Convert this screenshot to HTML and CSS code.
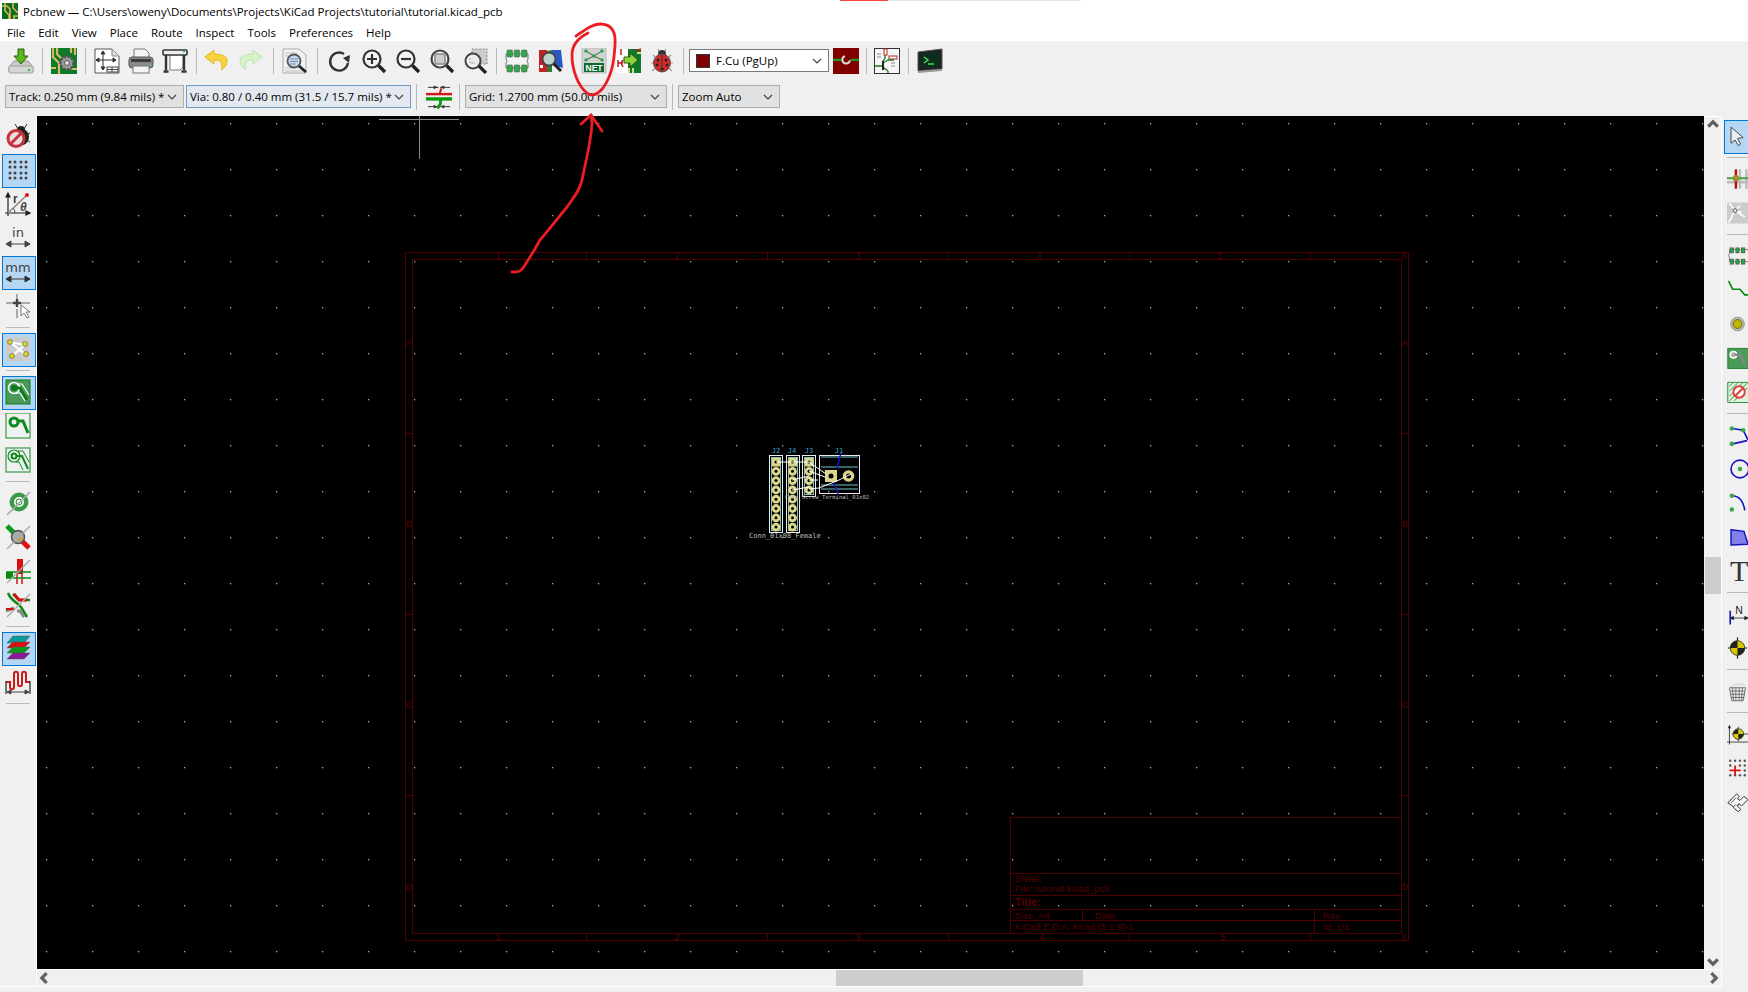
FILE: index.html
```html
<!DOCTYPE html>
<html lang="en">
<head>
    <meta charset="UTF-8">
    <title>Pcbnew — C:\Users\oweny\Documents\Projects\KiCad Projects\tutorial\tutorial.kicad_pcb</title>
    <link rel="stylesheet" href="styles.css">
</head>
<body>
<div class="app">
    <div class="titlebar">
        <svg class="app-icon" viewBox="0 0 16 16"><rect width="16" height="16" fill="#0b6b1e"/><path d="M0 3h5l3 3v10M3 0v8l4 4v4M11 0v5l5 5M16 13h-4v3" stroke="#d6b656" stroke-width="1.6" fill="none"/></svg>
        <span>Pcbnew — C:\Users\oweny\Documents\Projects\KiCad Projects\tutorial\tutorial.kicad_pcb</span>
    </div>
    <div class="menubar">
        <span>File</span><span>Edit</span><span>View</span><span>Place</span><span>Route</span><span>Inspect</span><span>Tools</span><span>Preferences</span><span>Help</span>
    </div>

    <div class="toolbar row-main">
        <!-- save -->
        <div class="tool"><svg class="ico" viewBox="0 0 26 26"><path d="M6 13h14l5 6v5H1v-5z" fill="#c9c9c9" stroke="#9a9a9a"/><rect x="1" y="18" width="24" height="7" rx="1.5" fill="#d6d6d6" stroke="#a0a0a0"/><circle cx="21" cy="22" r="1.2" fill="#2fc14a"/><path d="M10 1h6v7h4l-7 8-7-8h4z" fill="#57b81c" stroke="#2a5c10"/></svg></div>
        <div class="sep"></div>
        <!-- board setup -->
        <div class="tool"><svg class="ico" viewBox="0 0 26 26"><rect width="26" height="26" fill="#0d7a2a"/><path d="M2 0v9l6 6v11M6 0v6l5 5M0 20h5M20 0v5M24 0v7M20 21h6" stroke="#d8b765" stroke-width="2.2" fill="none"/><circle cx="16" cy="15" r="6.5" fill="#9a9a9a" stroke="#555" stroke-dasharray="2.4 1.4" stroke-width="2.4"/><circle cx="16" cy="15" r="2.4" fill="#e8e8e8" stroke="#555"/></svg></div>
        <div class="sep"></div>
        <!-- page settings -->
        <div class="tool"><svg class="ico" viewBox="0 0 26 26"><path d="M1 1h17l7 7v17H1z" fill="#fff" stroke="#555"/><path d="M18 1v7h7" fill="#ddd" stroke="#888"/><path d="M9 3v19M2 12h20M9 3l-2 3h4zM9 22l-2-3h4zM2 12l3-2v4zM22 12l-3-2v4z" stroke="#333" fill="#333"/><rect x="13" y="19" width="11" height="5" fill="#fff" stroke="#444"/><path d="M13 21.5h11M18 19v5" stroke="#444"/></svg></div>
        <!-- print -->
        <div class="tool"><svg class="ico" viewBox="0 0 26 26"><path d="M6 1h11l4 4v8H6z" fill="#f4f4f4" stroke="#777"/><rect x="1" y="9" width="24" height="11" rx="3" fill="#8a8a8a" stroke="#555"/><rect x="3" y="11" width="20" height="3" fill="#3c3c3c"/><rect x="5" y="18" width="16" height="7" fill="#f4f4f4" stroke="#777"/><circle cx="22" cy="17" r="1" fill="#3fcf55"/></svg></div>
        <!-- plot -->
        <div class="tool"><svg class="ico" viewBox="0 0 26 26"><path d="M8 6h13v13l-3 3H8z" fill="#fff" stroke="#777"/><rect x="1" y="2" width="24" height="5" rx="1" fill="#eee" stroke="#333" stroke-width="1.6"/><path d="M4 7v15M22 7v15M1.500 23.500h5M19.500 23.500h5" stroke="#333" stroke-width="2.4" fill="none"/><circle cx="22" cy="3.500" r="1" fill="#36c24f"/></svg></div>
        <div class="sep"></div>
        <!-- undo / redo -->
        <div class="tool"><svg class="ico" viewBox="2 0 26 26"><path d="M11 2 2 9l9 7v-4c5 0 8 1 8 7 0 2-1 3-1 3 5-3 6-6 6-9 0-5-5-7-13-7z" fill="#f7d33c" stroke="#e6b422"/></svg></div>
        <div class="tool"><svg class="ico" viewBox="1 0 26 26"><path d="M15 2l9 7-9 7v-4c-5 0-8 1-8 7 0 2 1 3 1 3-5-3-6-6-6-9 0-5 5-7 13-7z" fill="#d6f2c8" stroke="#c0e4b0"/></svg></div>
        <div class="sep"></div>
        <!-- find -->
        <div class="tool"><svg class="ico" viewBox="0 0 26 26"><path d="M1 1h16l7 6v18H1z" fill="#f2f2f2" stroke="#aaa"/><path d="M3 5h12M3 8h4M3 20h8M3 23h18" stroke="#bbb"/><circle cx="12" cy="13" r="6.500" fill="#c9dcf2" stroke="#555" stroke-width="1.800"/><path d="M8 11h8M8 13.500h8M8 16h6" stroke="#7a8ea5"/><path d="M17 18l7 6" stroke="#222" stroke-width="2.800"/></svg></div>
        <div class="sep wide"></div>
        <!-- redraw and zoom -->
        <div class="tool"><svg class="ico" viewBox="0 0 26 26"><path d="M17 6a9 9 0 1 0 4 9" fill="none" stroke="#333" stroke-width="2.400"/><path d="M23 7l-1 8-6-5z" fill="#333"/></svg></div>
        <div class="tool"><svg class="ico" viewBox="0 0 26 26"><circle cx="11" cy="11" r="8.500" fill="#f4f4f4" stroke="#333" stroke-width="2.200"/><path d="M6 11h10M11 6v10" stroke="#333" stroke-width="2.200"/><path d="M17.500 17.500l6.500 6.500" stroke="#222" stroke-width="3.400"/></svg></div>
        <div class="tool"><svg class="ico" viewBox="0 0 26 26"><circle cx="11" cy="11" r="8.500" fill="#f4f4f4" stroke="#333" stroke-width="2.200"/><path d="M6 11h10" stroke="#333" stroke-width="2.200"/><path d="M17.500 17.500l6.500 6.500" stroke="#222" stroke-width="3.400"/></svg></div>
        <div class="tool"><svg class="ico" viewBox="0 0 26 26"><circle cx="11" cy="11" r="8.500" fill="#f4f4f4" stroke="#444" stroke-width="2.200"/><rect x="6" y="6" width="10" height="10" rx="1.500" fill="#ccc" stroke="#888" stroke-width="1.500"/><path d="M17.500 17.500l6.500 6.500" stroke="#222" stroke-width="3.400"/></svg></div>
        <div class="tool"><svg class="ico" viewBox="0 0 26 26"><rect x="9" y="1" width="15" height="15" fill="#ccc" stroke="#888" stroke-dasharray="2 1.500"/><circle cx="10" cy="13" r="7.500" fill="#f4f4f4" fill-opacity=".8" stroke="#444" stroke-width="2"/><path d="M7 10v5h5" stroke="#999" fill="none" stroke-dasharray="2 1"/><path d="M16 18l7 7" stroke="#222" stroke-width="3.200"/></svg></div>
        <div class="sep narrow"></div>
        <!-- footprint editor -->
        <div class="tool"><svg class="ico" viewBox="0 0 26 26"><path d="M2 6h22v5l-1 2 1 2v5H2v-5l1-2-1-2z" fill="#f4f4f4" stroke="#777"/><g fill="#2fa84a" stroke="#555" stroke-width=".6"><rect x="3" y="2" width="5.500" height="7" rx="1"/><rect x="10.200" y="2" width="5.500" height="7" rx="1"/><rect x="17.500" y="2" width="5.500" height="7" rx="1"/><rect x="3" y="17" width="5.500" height="7" rx="1"/><rect x="10.200" y="17" width="5.500" height="7" rx="1"/><rect x="17.500" y="17" width="5.500" height="7" rx="1"/></g></svg></div>
        <!-- footprint browser -->
        <div class="tool"><svg class="ico" viewBox="0 0 26 26"><rect x="1" y="2" width="8" height="22" fill="#c42127"/><path d="M9 3l5-1v22l-5 0z" fill="#2d7d36"/><path d="M14 2l9 0 2 18-11-3z" fill="#2b59c3"/><rect x="2" y="17" width="3" height="3" fill="#fff"/><circle cx="11" cy="11" r="6.500" fill="#cfe6e0" fill-opacity=".85" stroke="#444" stroke-width="1.800"/><path d="M16 16l7 7" stroke="#222" stroke-width="3"/></svg></div>
        <div class="sep hidden"></div>
        <!-- update from netlist, the one circled in red -->
        <div class="tool"><svg class="ico" viewBox="0 0 24 26"><rect width="24" height="25" fill="#d2d2d2" stroke="#bbb"/><path d="M4 3l8 5 8-5M4 12l8-4 8 4" stroke="#2d6a2d" fill="none"/><g fill="#35a04a"><circle cx="4" cy="3" r="1.700"/><circle cx="20" cy="3" r="1.700"/><circle cx="12" cy="8" r="1.700"/><circle cx="4" cy="12" r="1.700"/><circle cx="20" cy="12" r="1.700"/></g><rect x="2" y="15" width="20" height="9" fill="#0b6b2e"/><text x="12" y="23" class="net-label">NET</text></svg></div>
        <!-- update pcb from schematic -->
        <div class="tool"><svg class="ico" viewBox="0 0 26 26"><rect x="10" y="1" width="16" height="24" fill="#0d7a2a"/><rect x="1" y="1" width="12" height="24" fill="#fff"/><path d="M6 1v6M3 12v7M3 15h5M8 12l-2 3 2 4M14 20v5M18 20v5M20 3l6-2" stroke="#b22" stroke-width="1.500" fill="none"/><path d="M14 20v5M18 20v5M22 5h4" stroke="#d8d88a" stroke-width="2"/><path d="M9 9h6V5l8 7-8 7v-4H9z" fill="#8fd23c" stroke="#2f5a12"/></svg></div>
        <!-- erc bug -->
        <div class="tool"><svg class="ico" viewBox="0 0 22 26"><path d="M2 7l5 5M20 7l-5 5M0 15h22M1 23l5-4M21 23l-5-4M7 1l2 4M15 1l-2 4" stroke="#999" stroke-width="1.200"/><circle cx="11" cy="6" r="4" fill="#333"/><ellipse cx="11" cy="15" rx="8.500" ry="9" fill="#d42a2a" stroke="#555"/><path d="M11 7v17" stroke="#333"/><g fill="#222"><circle cx="7" cy="12" r="1.500"/><circle cx="15" cy="12" r="1.500"/><circle cx="6" cy="17" r="1.500"/><circle cx="16" cy="17" r="1.500"/><circle cx="10" cy="21" r="1"/><circle cx="12.500" cy="21" r="1"/></g></svg></div>
        <div class="sep"></div>
        <div class="combo combo-white layer-combo">
            <span class="swatch"></span><span class="combo-text">F.Cu (PgUp)</span>
            <svg class="chev" viewBox="0 0 10 6"><path d="M1 1l4 4 4-4" fill="none" stroke="#444" stroke-width="1.200"/></svg>
        </div>
        <!-- via layer pair -->
        <div class="tool"><svg class="ico" viewBox="0 0 24 24"><rect width="24" height="24" fill="#800000"/><path d="M0 11h8M16 11h8" stroke="#1f9a1f" stroke-width="2"/><path d="M15 9a3.500 3.500 0 1 1-6 0" transform="rotate(40 12 11)" fill="none" stroke="#ddd" stroke-width="1.800"/></svg></div>
        <div class="sep narrow"></div>
        <!-- eeschema -->
        <div class="tool"><svg class="ico" viewBox="0 0 26 26"><rect x=".5" y=".5" width="25" height="25" fill="#f6f6f6" stroke="#333"/><rect x="10" y="1" width="3" height="6" fill="#fff" stroke="#b22"/><rect x="15" y="8" width="8" height="3" fill="#fff" stroke="#b22"/><path d="M11 7v3l-2 3M5 18h4M9 13v9M9 15l5-3M9 19l5 4M14 12h6M14 23v2M5 18H1" stroke="#1a7a1a" stroke-width="1.300" fill="none"/><path d="M9 13v9" stroke="#222" stroke-width="2"/><path d="M3 6h4M3 9h4M17 15h4M17 18h4" stroke="#888"/></svg></div>
        <div class="sep"></div>
        <!-- scripting console -->
        <div class="tool"><svg class="ico" viewBox="0 0 26 26"><path d="M1 4l24-3v20l-24 2z" fill="#222" stroke="#555"/><path d="M3 6l20-2.500v15L3 20z" fill="#0d2e1c"/><path d="M7 9l4 3-4 3M11 16h6" stroke="#3fe05c" stroke-width="1.500" fill="none"/><path d="M1 23l24-2v2l-24 2z" fill="#999"/></svg></div>
    </div>

    <div class="toolbar row-aux">
        <div class="combo track-combo"><span class="combo-text">Track: 0.250 mm (9.84 mils) *</span><svg class="chev" viewBox="0 0 10 6"><path d="M1 1l4 4 4-4" fill="none" stroke="#444" stroke-width="1.200"/></svg></div>
        <div class="combo combo-focus via-combo"><span class="combo-text">Via: 0.80 / 0.40 mm (31.5 / 15.7 mils) *</span><svg class="chev" viewBox="0 0 10 6"><path d="M1 1l4 4 4-4" fill="none" stroke="#444" stroke-width="1.200"/></svg></div>
        <div class="sep aux-sep"></div>
        <!-- auto track width -->
        <div class="tool wide-tool"><svg class="ico" viewBox="0 0 27 26"><path d="M2 3h11M15 3h10M8 3l4 0M19 3h-4M2 23h11M15 23h10" stroke="#333"/><path d="M8 1l4 2-4 2zM19 1l-4 2 4 2zM8 21l4 2-4 2zM19 21l-4 2 4 2z" fill="#333"/><path d="M0 10h27" stroke="#d01818" stroke-width="2.500"/><path d="M14 10l2-6" stroke="#d01818" stroke-width="2"/><path d="M0 15h27" stroke="#0a9a0a" stroke-width="3.500"/><path d="M15 15v5l-3 5" stroke="#0a9a0a" stroke-width="3" fill="none"/></svg></div>
        <div class="sep narrow"></div>
        <div class="combo grid-combo"><span class="combo-text">Grid: 1.2700 mm (50.00 mils)</span><svg class="chev" viewBox="0 0 10 6"><path d="M1 1l4 4 4-4" fill="none" stroke="#444" stroke-width="1.200"/></svg></div>
        <div class="sep aux-sep"></div>
        <div class="combo zoom-combo"><span class="combo-text">Zoom Auto</span><svg class="chev" viewBox="0 0 10 6"><path d="M1 1l4 4 4-4" fill="none" stroke="#444" stroke-width="1.200"/></svg></div>
    </div>

    <div class="workspace">
        <div class="side-tools left-tools">
            <!-- drc off -->
            <div class="tool"><svg class="ico" viewBox="0 0 26 26"><path d="M10 1l3 5M22 1l-3 5M6 9l4 3M25 10l-4 2M25 19l-4-2" stroke="#333"/><circle cx="16" cy="7" r="4" fill="#222"/><ellipse cx="16" cy="14" rx="8" ry="8.500" fill="#222"/><circle cx="11" cy="15.500" r="8" fill="#eadfdf" stroke="#c8323c" stroke-width="3"/><path d="M5.500 21l11-11" stroke="#c8323c" stroke-width="3"/></svg></div>
            <!-- grid -->
            <div class="tool on"><svg class="ico" viewBox="0 0 26 26"><g fill="#444"><circle cx="5" cy="5" r="1.500"/><circle cx="10" cy="5" r="1.500"/><circle cx="16" cy="5" r="1.500"/><circle cx="21" cy="5" r="1.500"/><circle cx="5" cy="10" r="1.500"/><circle cx="10" cy="10" r="1.500"/><circle cx="16" cy="10" r="1.500"/><circle cx="21" cy="10" r="1.500"/><circle cx="5" cy="16" r="1.500"/><circle cx="10" cy="16" r="1.500"/><circle cx="16" cy="16" r="1.500"/><circle cx="21" cy="16" r="1.500"/><circle cx="5" cy="21" r="1.500"/><circle cx="10" cy="21" r="1.500"/><circle cx="16" cy="21" r="1.500"/><circle cx="21" cy="21" r="1.500"/></g></svg></div>
            <!-- polar coords -->
            <div class="tool"><svg class="ico" viewBox="0 0 26 26"><path d="M3 2v23M0 22h25M3 2l-2 4h4zM25 22l-4-2v4z" stroke="#222" fill="#222" stroke-width="1.200"/><path d="M3 22L22 4" stroke="#888" stroke-width="1.500"/><circle cx="22" cy="4" r="2" fill="#e81010"/><path d="M10 22a7 7 0 0 0-2-5" fill="none" stroke="#444"/><text x="8" y="12" class="ico-label">r</text><text x="15" y="20" class="ico-label italic">θ</text></svg></div>
            <!-- inch -->
            <div class="tool"><svg class="ico" viewBox="0 0 26 26"><text x="13" y="12" class="ico-unit">in</text><path d="M1 19h24M1 19l5-3v6zM25 19l-5-3v6z" stroke="#444" fill="#444"/></svg></div>
            <!-- millimetres -->
            <div class="tool on"><svg class="ico" viewBox="0 0 26 26"><text x="13" y="13" class="ico-unit">mm</text><path d="M1 20h24M1 20l5-3v6zM25 20l-5-3v6z" stroke="#333" fill="#333"/></svg></div>
            <!-- full cursor -->
            <div class="tool"><svg class="ico" viewBox="0 0 26 26"><path d="M12 1v9M12 16v9M1 10h24" stroke="#aaa" stroke-width="2"/><path d="M8 10h8M12 6v8" stroke="#444" stroke-width="2.400"/><path d="M16 12v11l3-3 3 5 2-1-3-5h4z" fill="#fff" stroke="#777"/></svg></div>
            <div class="side-sep"></div>
            <!-- ratsnest -->
            <div class="tool on"><svg class="ico" viewBox="0 0 26 26"><rect x="1" y="1" width="24" height="24" rx="2" fill="#ccc"/><path d="M5 6l15 3M5 6l16 13M7 20L20 9" stroke="#fff" stroke-width="2"/><g fill="#d8d820" stroke="#555" stroke-width=".6"><circle cx="5" cy="6" r="2.500"/><circle cx="20" cy="8" r="2.500"/><circle cx="7" cy="20" r="2.500"/><circle cx="21" cy="18" r="2.500"/></g></svg></div>
            <div class="side-sep"></div>
            <!-- zone fill modes -->
            <div class="tool on"><svg class="ico" viewBox="0 0 26 26"><rect x="1" y="1" width="24" height="24" fill="#4a9a5a" stroke="#127a20"/><circle cx="9" cy="9" r="5.500" fill="none" stroke="#fff" stroke-width="1.500"/><circle cx="9" cy="9" r="3" fill="#0a7a1a"/><path d="M9 9h6l7 12" fill="none" stroke="#0a7a1a" stroke-width="2.500"/><path d="M12 5h5l7 11M11 14h4l5 8" fill="none" stroke="#fff" stroke-width="1.200"/></svg></div>
            <div class="tool"><svg class="ico" viewBox="0 0 26 26"><rect x="1" y="0" width="24" height="25" fill="none" stroke="#3a9a4a" stroke-width="1.200"/><circle cx="9" cy="9" r="4" fill="none" stroke="#0a8a1a" stroke-width="3"/><path d="M13 8h5l5 12" fill="none" stroke="#0a8a1a" stroke-width="3"/></svg></div>
            <div class="tool"><svg class="ico" viewBox="0 0 26 26"><rect x="1" y="1" width="24" height="24" fill="none" stroke="#3a9a4a" stroke-width="1.200"/><circle cx="9" cy="9" r="2.500" fill="none" stroke="#0a8a1a" stroke-width="2"/><circle cx="9" cy="9" r="6" fill="none" stroke="#0a8a1a" stroke-width="1.200"/><path d="M12 9h5l6 13" fill="none" stroke="#0a8a1a" stroke-width="2"/><path d="M13 4h5l6 11M11 15h3l4 8" fill="none" stroke="#0a8a1a" stroke-width="1"/></svg></div>
            <div class="side-sep"></div>
            <!-- outline modes -->
            <div class="tool"><svg class="ico" viewBox="0 0 26 26"><circle cx="14" cy="12" r="9" fill="#3a9a4a" stroke="#3a9a4a"/><circle cx="14" cy="12" r="5" fill="#fff"/><circle cx="14" cy="12" r="3" fill="none" stroke="#1a8a2a"/><path d="M2 25L25 2" stroke="#aaa" stroke-width="1.500"/></svg></div>
            <div class="tool"><svg class="ico" viewBox="0 0 26 26"><path d="M2 2l10 10" stroke="#0a9a1a" stroke-width="5"/><path d="M14 14l10 10" stroke="#e01010" stroke-width="5"/><circle cx="13" cy="13" r="6.500" fill="#aaa" stroke="#555" stroke-width="1.500"/><path d="M12 17l4-5 1 4z" fill="#d8a010"/><path d="M2 25L25 2" stroke="#aaa" stroke-width="1.500"/></svg></div>
            <div class="tool"><svg class="ico" viewBox="0 0 26 26"><rect x="12" y="1" width="6" height="15" fill="#d81010"/><path d="M12 16v10M17 16v10" stroke="#d81010" stroke-width="1.500"/><rect x="1" y="14" width="7" height="6" fill="#0a8a10"/><path d="M1 14h25M1 20h25" stroke="#0a8a10" stroke-width="1.500"/><path d="M2 25L25 2" stroke="#aaa" stroke-width="1.500"/></svg></div>
            <div class="tool"><svg class="ico" viewBox="0 0 26 26"><path d="M8 2l6 6 11 0M3 1c3 8 9 9 13 14l6 10" fill="none" stroke="#0a8a10" stroke-width="2.500"/><path d="M9 2l5 6h8" fill="none" stroke="#d81010" stroke-width="3"/><path d="M1 19l8-3M12 19h3l4 6" fill="none" stroke="#888" stroke-width="3"/><path d="M1 17h8" stroke="#d81010" stroke-width="2"/><path d="M2 25L25 2" stroke="#aaa" stroke-width="1.500"/></svg></div>
            <div class="side-sep"></div>
            <!-- layer colours -->
            <div class="tool on"><svg class="ico" viewBox="0 0 26 26"><path d="M8 1h17l-6 7H2z" fill="#0a9a9a" stroke="#555" stroke-width=".5"/><path d="M8 7h17l-6 6H2z" fill="#d81010" stroke="#555" stroke-width=".5"/><path d="M8 12h17l-6 6H2z" fill="#0a9a1a" stroke="#555" stroke-width=".5"/><path d="M8 18h17l-6 6H2z" fill="#8a1a9a" stroke="#555" stroke-width=".5"/></svg></div>
            <!-- length tuning -->
            <div class="tool"><svg class="ico" viewBox="0 0 26 26"><path d="M1 13h4v5c0 3 4 3 4 0V5c0-3 4-3 4 0v10c0 3 4 3 4 0V5c0-3 4-3 4 0v8h4" fill="none" stroke="#d01a1a" stroke-width="2"/><path d="M1 12v13M25 12v13" stroke="#222" stroke-width="1.200"/><path d="M2 23h22M2 23l4-2v4zM24 23l-4-2v4z" stroke="#444" fill="#444"/></svg></div>
            <div class="side-sep"></div>
        </div>

        <div class="center">
            <div class="canvas-row">
                <svg class="canvas" viewBox="37 116 1667 853">
                    <defs>
                        <pattern id="dots" width="46" height="46" patternUnits="userSpaceOnUse" y="31"><rect width="1.300" height="1.300" fill="#a8a8a8"/></pattern>
                        <g id="pad"><circle r="4.400" fill="#dcd68a"/><circle r="1.500" fill="#000"/></g>
                        <g id="col4"><use href="#pad" y="0"/><use href="#pad" y="9.300"/><use href="#pad" y="18.600"/><use href="#pad" y="27.900"/></g>
                    </defs>
                    <rect x="37" y="116" width="1667" height="853" fill="#000"/>
                    <rect x="37" y="116" width="1667" height="853" fill="url(#dots)" class="crisp"/>

                    <!-- crosshair -->
                    <path d="M379 119.500h80M419.500 116v43" stroke="#888" class="crisp"/>

                    <!-- sheet frame -->
                    <g class="sheet">
                        <rect x="405.500" y="252.500" width="1003" height="688"/>
                        <rect x="412.500" y="259.500" width="989" height="674"/>
                        <path d="M586.500 252v7M767.500 252v7M948.500 252v7M1129.500 252v7M1310.500 252v7M586.500 934v6M767.500 934v6M948.500 934v6M1129.500 934v6M1310.500 934v6"/>
                        <path d="M406 433.500h6M406 614.500h6M406 795.500h6M1402 433.500h7M1402 614.500h7M1402 795.500h7"/>
                        <rect x="1010.500" y="817.500" width="391" height="116"/>
                        <path d="M1010 873.500h391M1010 895.500h391M1010 909.500h391M1010 920.500h391M1082.500 909v11M1314.500 909v24"/>
                    </g>
                    <g class="sheet-text">
                        <text x="498" y="259" class="mid">1</text><text x="677" y="259" class="mid">2</text><text x="858" y="259" class="mid">3</text><text x="1039" y="259" class="mid">4</text><text x="1220" y="259" class="mid">5</text><text x="1404" y="259" class="mid">6</text>
                        <text x="498" y="940" class="mid">1</text><text x="677" y="940" class="mid">2</text><text x="858" y="940" class="mid">3</text><text x="1042" y="940" class="mid">4</text><text x="1223" y="940" class="mid">5</text><text x="1404" y="940" class="mid">6</text>
                        <text x="409" y="346" class="mid">A</text><text x="409" y="527" class="mid">B</text><text x="409" y="708" class="mid">C</text><text x="409" y="890" class="mid">D</text>
                        <text x="1405" y="346" class="mid">A</text><text x="1405" y="527" class="mid">B</text><text x="1405" y="708" class="mid">C</text><text x="1405" y="890" class="mid">D</text>
                        <text x="1015" y="882">Sheet:</text>
                        <text x="1015" y="892">File: tutorial.kicad_pcb</text>
                        <text x="1015" y="906" class="sheet-title">Title:</text>
                        <text x="1015" y="919">Size: A4</text>
                        <text x="1095" y="919">Date:</text>
                        <text x="1323" y="919">Rev:</text>
                        <text x="1015" y="930">KiCad E.D.A.  kicad (5.1.9)-1</text>
                        <text x="1323" y="930">Id: 1/1</text>
                    </g>

                    <!-- board -->
                    <g class="courtyard">
                        <rect x="769.500" y="455.500" width="13" height="77"/>
                        <rect x="786.500" y="455.500" width="13" height="77"/>
                        <rect x="802.500" y="455.500" width="13" height="41"/>
                        <rect x="819.500" y="455.500" width="40" height="38"/>
                    </g>
                    <g class="fab">
                        <rect x="771.500" y="457.500" width="9" height="73"/>
                        <rect x="788.500" y="457.500" width="9" height="73"/>
                        <rect x="804.500" y="457.500" width="9" height="37"/>
                        <path d="M821 467h37M821 485h37M821 489h37M821 457h37"/>
                    </g>
                    <rect x="772" y="458" width="8.500" height="8.500" fill="#dcd68a"/>
                    <rect x="788.500" y="458" width="8.500" height="8.500" fill="#dcd68a"/>
                    <rect x="805" y="458" width="8.500" height="8.500" fill="#dcd68a"/>
                    <use href="#col4" x="776" y="462"/><use href="#col4" x="776" y="499.200"/>
                    <use href="#col4" x="792.500" y="462"/><use href="#col4" x="792.500" y="499.200"/>
                    <use href="#col4" x="809" y="462"/>
                    <rect x="825" y="470" width="12" height="12" fill="#dcd68a"/>
                    <circle cx="831" cy="476" r="2.500"/>
                    <circle cx="848.500" cy="476" r="5.800" fill="#dcd68a"/><circle cx="848.500" cy="476" r="2.500"/>
                    <path d="M841 453l-4 15M834 482l4 12" stroke="#1414d8" stroke-width="1.400"/>
                    <path d="M776 462h33M809 462l17 12M792 480l17-4M809 471l16 6M792 490l17-3M809 480h9M809 489l10-1 20-8 12-6" stroke="#fff" class="ratsnest"/>
                    <g class="ref">
                        <text x="776" y="453">J2</text><text x="792" y="453">J4</text><text x="809" y="453">J3</text><text x="839" y="453">J1</text>
                    </g>
                    <g class="fp-value">
                        <text x="749" y="538">Conn_01x08_Female</text>
                        <text x="785" y="499" class="fp-small">Conn_Screw_Terminal_01x02</text>
                    </g>
                </svg>
                <div class="vscroll">
                    <svg class="arrow" viewBox="0 0 10 10"><path d="M2 6l3-3 3 3" fill="none" stroke="#606060" stroke-width="2"/></svg>
                    <div class="vtrack"><div class="vthumb"></div></div>
                    <svg class="arrow" viewBox="0 0 10 10"><path d="M2 4l3 3 3-3" fill="none" stroke="#606060" stroke-width="2"/></svg>
                </div>
            </div>
            <div class="hscroll">
                <svg class="arrow" viewBox="0 0 10 10"><path d="M6 2L3 5l3 3" fill="none" stroke="#606060" stroke-width="2"/></svg>
                <div class="htrack"><div class="hthumb"></div></div>
                <svg class="arrow" viewBox="0 0 10 10"><path d="M4 2l3 3-3 3" fill="none" stroke="#606060" stroke-width="2"/></svg>
            </div>
        </div>

        <div class="side-tools right-tools">
            <div class="tool on"><svg class="ico" viewBox="0 0 26 26"><path d="M5 2v20l5-4 4 7 3-2-4-7 7-1z" fill="#e8eef4" stroke="#444" stroke-width="1.200"/></svg></div>
            <div class="side-sep"></div>
            <div class="tool"><svg class="ico" viewBox="0 0 26 26"><path d="M16 1v24M24 1v24M0 17h26" stroke="#bbb" stroke-width="3"/><path d="M0 12h26" stroke="#5aa85a" stroke-width="3"/><path d="M11 1v24" stroke="#b01010" stroke-width="3"/><circle cx="11" cy="12" r="4" fill="#a88a30"/></svg></div>
            <div class="tool"><svg class="ico" viewBox="0 0 26 26"><rect width="26" height="26" rx="2" fill="#ccc"/><path d="M10 10L3 1M10 10L16 4M10 10L2 25M10 10L18 12M10 10l12 8" stroke="#fff" stroke-width="2"/><circle cx="10" cy="10" r="2.500" fill="#ddd" stroke="#444"/></svg></div>
            <div class="side-sep"></div>
            <div class="tool"><svg class="ico" viewBox="0 0 26 26"><path d="M3 5h23M3 20h23M3 5v5l-1 2 1 3v5" stroke="#666" fill="none"/><g fill="#1fb03a" stroke="#555"><rect x="4" y="3" width="4" height="6"/><rect x="11" y="3" width="4" height="6"/><rect x="18" y="3" width="4" height="6"/><rect x="4" y="17" width="4" height="6"/><rect x="11" y="17" width="4" height="6"/><rect x="18" y="17" width="4" height="6"/></g></svg></div>
            <div class="tool"><svg class="ico" viewBox="0 0 26 26"><path d="M2 2l5 10h9l6 7h4" fill="none" stroke="#0a8a10" stroke-width="2"/></svg></div>
            <div class="tool"><svg class="ico" viewBox="0 0 26 26"><circle cx="13" cy="13" r="8.500" fill="#bbb" stroke="#888" stroke-width="1"/><circle cx="13" cy="13" r="5.500" fill="#c0b800" stroke="#5a5a00"/></svg></div>
            <div class="tool"><svg class="ico" viewBox="0 0 26 26"><rect x="1" y="1" width="26" height="25" fill="#4a9a5a" stroke="#127a20"/><circle cx="8" cy="9" r="4" fill="#aaa" stroke="#fff" stroke-width="2"/><path d="M10 9h6l6 12" fill="none" stroke="#888" stroke-width="3"/></svg></div>
            <div class="tool"><svg class="ico" viewBox="0 0 26 26"><rect x="1" y="1" width="26" height="25" fill="#dff0df" stroke="#0a7a1a"/><path d="M3 6l4-4M3 12l10-10M3 18l16-16M3 24l22-22M9 24l16-16" stroke="#2a9a3a" stroke-width="1.200"/><circle cx="15" cy="13" r="7" fill="#fff" stroke="#e04040" stroke-width="2.500"/><path d="M10 18l10-10" stroke="#e04040" stroke-width="2.500"/></svg></div>
            <div class="side-sep"></div>
            <div class="tool"><svg class="ico" viewBox="0 0 26 26"><path d="M7 5l13 2 6 12M7 24l18-4" fill="none" stroke="#1414c0" stroke-width="2"/><circle cx="6" cy="5" r="2.800" fill="#3aa84a"/><circle cx="20" cy="7" r="2.800" fill="#3aa84a"/><circle cx="6" cy="24" r="2.800" fill="#3aa84a"/></svg></div>
            <div class="tool"><svg class="ico" viewBox="0 0 26 26"><circle cx="16" cy="13" r="11" fill="none" stroke="#1414c0" stroke-width="2"/><circle cx="16" cy="13" r="2.800" fill="#3aa84a"/></svg></div>
            <div class="tool"><svg class="ico" viewBox="0 0 26 26"><path d="M6 4c8 0 14 6 16 18" fill="none" stroke="#1414c0" stroke-width="2"/><circle cx="6" cy="4" r="2.800" fill="#3aa84a"/><circle cx="6" cy="21" r="2.800" fill="#3aa84a"/></svg></div>
            <div class="tool"><svg class="ico" viewBox="0 0 26 26"><path d="M5 4l16 2 5 16-21 1z" fill="#8080e8" stroke="#1414c0" stroke-width="1.800"/></svg></div>
            <div class="tool"><span class="tool-letter">T</span></div>
            <div class="side-sep"></div>
            <div class="tool"><svg class="ico" viewBox="0 0 26 26"><text x="15" y="13" class="ico-n">N</text><path d="M4 18h22M4 18l4-2v4zM26 18l-4-2v4z" stroke="#222" fill="#222"/><path d="M4 9v17" stroke="#1414c0" stroke-width="2"/></svg></div>
            <div class="tool"><svg class="ico" viewBox="0 0 26 26"><path d="M13 0v26M1 13h24" stroke="#222" stroke-width="1.500"/><circle cx="13" cy="13" r="9" fill="#d8c800" stroke="#222"/><path d="M13 4a9 9 0 0 0-9 9h9zM13 22a9 9 0 0 0 9-9h-9z" fill="#222"/></svg></div>
            <div class="side-sep"></div>
            <div class="tool"><svg class="ico" viewBox="0 0 26 26"><path d="M5 8c3-5 14-5 18-1" fill="#e8e8e8" stroke="#ccc"/><path d="M3 9h20l-3 16H6z" fill="#f4f4f4" stroke="#555"/><path d="M7 9l1 16M11 9v16M15 9v16M19 9l-1 16M4 13h18M5 17h17M5 21h16" stroke="#555"/></svg></div>
            <div class="side-sep"></div>
            <div class="tool"><svg class="ico" viewBox="0 0 26 26"><path d="M3 2v24M0 23h26" stroke="#222"/><path d="M3 2l-2 4h4z" fill="#222"/><path d="M14 4v18M6 13h20" stroke="#222"/><circle cx="14" cy="13" r="6.500" fill="#e0d000" stroke="#222"/><path d="M14 7a6 6 0 0 0-6 6h6zM14 19a6 6 0 0 0 6-6h-6z" fill="#222"/></svg></div>
            <div class="tool"><svg class="ico" viewBox="0 0 26 26"><g fill="#555"><circle cx="4" cy="4" r="1.500"/><circle cx="10" cy="4" r="1.500"/><circle cx="16" cy="4" r="1.500"/><circle cx="22" cy="4" r="1.500"/><circle cx="4" cy="10" r="1.500"/><circle cx="16" cy="10" r="1.500"/><circle cx="22" cy="10" r="1.500"/><circle cx="4" cy="22" r="1.500"/><circle cx="10" cy="22" r="1.500"/><circle cx="16" cy="22" r="1.500"/><circle cx="22" cy="22" r="1.500"/><circle cx="22" cy="16" r="1.500"/></g><path d="M3 16h14M10 10v12" stroke="#e01010" stroke-width="2.200"/></svg></div>
            <!-- measure, calipers -->
            <div class="tool"><svg class="ico" viewBox="0 0 26 26"><path d="M1 14L12 3l3 3-2 3 3 2 5-5 5 4-8 8-3-3-2 3 4 4-3 3-5-4-2-3z" fill="#f4f4f4" stroke="#333" stroke-width="1.200"/><path d="M5 14l6-6M12 18l3-3M8 19l3-3" stroke="#333"/></svg></div>
        </div>
    </div>
    <div class="statusbar">
        <span class="st-pads">Pads</span><span class="st-vias">Vias</span><span class="st-track">Track Segments</span><span class="st-nodes">Nodes</span><span class="st-nets">Nets</span><span class="st-unrouted">Unrouted</span>
    </div>

    <!-- strip at the very top of the capture -->
    <div class="capture-strip"><span class="strip-red"></span><span class="strip-grey"></span></div>

    <!-- hand drawn annotation over the window -->
    <svg class="annotation" viewBox="0 0 1748 992">
        <path d="M576 36C585 30 592 24 600 24 612 24 616 32 615 45 614 62 612 75 603 88 598 94 592 97 587 93 578 86 572 70 572 55 572 45 578 38 588 33"/>
        <path d="M512 272C518 272 520 272 523 268 530 257 534 251 540 240 550 228 558 218 567 207 574 197 580 190 582 180 586 160 591 142 592 123L591 115"/>
        <path d="M581 124 591 115 602 131"/>
    </svg>
</div>
</body>
</html>
```

FILE: styles.css
```css
* {
    box-sizing: border-box;
}
html, body {
    margin: 0;
    height: 100%;
    overflow: hidden;
}
body {
    font-family: "Open Sans", "Noto Sans", sans-serif;
    font-size: 11.500px;
    color: #000;
    background: #f0f0f0;
}
.app {
    position: relative;
    width: 1748px;
    height: 992px;
    overflow: hidden;
}

/* window chrome */
.titlebar {
    height: 22px;
    background: #fff;
    display: flex;
    align-items: center;
    padding-left: 2px;
    gap: 5px;
}
.app-icon {
    width: 16px;
    height: 16px;
}
.menubar {
    height: 19px;
    background: #fff;
    display: flex;
    align-items: center;
    padding: 2px 0 0 7px;
    gap: 13px;
}

/* toolbars */
.toolbar {
    display: flex;
    align-items: center;
    background: #f0f0f0;
}
.row-main {
    height: 41px;
    padding: 0 0 2px 4px;
}
.row-aux {
    height: 34px;
    padding: 0 0 5px 5px;
}
.tool {
    width: 34px;
    height: 34px;
    flex: none;
    display: flex;
    align-items: center;
    justify-content: center;
}
.wide-tool {
    width: 35px;
}
.ico {
    width: 26px;
    height: 26px;
    overflow: hidden;
}
.sep {
    width: 9px;
    height: 26px;
    flex: none;
}
.sep::before {
    content: "";
    display: block;
    width: 1px;
    height: 100%;
    margin: 0 auto;
    background: #b9b9b9;
}
.sep.wide {
    width: 11px;
}
.sep.narrow {
    width: 7px;
}
.sep.hidden::before {
    background: none;
}
.aux-sep {
    width: 10px;
}
.combo {
    height: 23px;
    flex: none;
    display: flex;
    align-items: center;
    justify-content: space-between;
    padding: 0 6px 0 3px;
    background: #e1e1e1;
    border: 1px solid #adadad;
    white-space: nowrap;
}
.combo-white {
    background: #fff;
    border-color: #7a7a7a;
}
.combo-focus {
    background: #e4e9ef;
    border-color: #6c9cc6;
    margin-left: 2px;
}
.chev {
    width: 10px;
    height: 6px;
    flex: none;
}
.track-combo {
    width: 179px;
}
.via-combo {
    width: 225px;
}
.grid-combo {
    width: 202px;
    margin-left: 2px;
}
.zoom-combo {
    width: 102px;
    margin-left: 1px;
}
.layer-combo {
    width: 140px;
    margin-left: 1px;
    padding-left: 6px;
    justify-content: flex-start;
}
.layer-combo .chev {
    margin-left: auto;
}
.swatch {
    width: 14px;
    height: 14px;
    margin-right: 6px;
    background: #800000;
    border: 1px solid #333;
}

/* work area */
.workspace {
    display: flex;
    height: 871px;
}
.side-tools {
    flex: none;
    display: flex;
    flex-direction: column;
    background: #f0f0f0;
    overflow: hidden;
}
.left-tools {
    width: 37px;
    padding-top: 3px;
    border-right: 1px solid #fff;
    border-bottom: 1px solid #fff;
}
.left-tools .tool {
    width: 36px;
}
.right-tools {
    width: 27px;
    padding-top: 3px;
    border-left: 1px solid #fff;
    align-items: flex-start;
}
.right-tools .tool {
    width: 26px;
    justify-content: flex-start;
    padding-left: 5px;
}
.tool.on {
    position: relative;
}
.tool.on::before {
    content: "";
    position: absolute;
    left: 2px;
    top: 1px;
    width: 32px;
    height: 32px;
    background: #b5d7f3;
    border: 1px solid #0078d7;
}
.tool.on .ico {
    position: relative;
}
.right-tools .tool.on::before {
    width: 40px;
}
.side-sep {
    height: 9px;
    flex: none;
    display: flex;
    align-items: center;
    justify-content: center;
    width: 100%;
}
.side-sep::before {
    content: "";
    width: 24px;
    height: 1px;
    background: #b9b9b9;
}
.right-tools .side-sep {
    justify-content: flex-start;
    padding-left: 5px;
}
.tool-letter {
    font-family: "Liberation Serif", serif;
    font-size: 30px;
    line-height: 30px;
    margin-left: 3px;
    color: #333;
}

/* canvas and scroll bars */
.center {
    flex: 1;
    min-width: 0;
    display: flex;
    flex-direction: column;
}
.canvas-row {
    height: 853px;
    display: flex;
}
.canvas {
    width: 1667px;
    height: 853px;
    display: block;
    flex: none;
}
.crisp {
    shape-rendering: crispEdges;
}
.vscroll {
    flex: 1;
    display: flex;
    flex-direction: column;
    align-items: center;
    background: #f0f0f0;
    border-top: 1px solid #fff;
    padding: 0 1px;
}
.arrow {
    width: 16px;
    height: 16px;
    flex: none;
}
.vtrack {
    flex: 1;
    width: 100%;
    padding-top: 424px;
}
.vthumb {
    height: 37px;
    background: #cdcdcd;
}
.hscroll {
    height: 18px;
    display: flex;
    align-items: center;
    background: #f0f0f0;
    border-top: 1px solid #fff;
    border-bottom: 1px solid #fff;
}
.htrack {
    flex: 1;
    height: 100%;
    padding-left: 783px;
}
.hthumb {
    width: 247px;
    height: 100%;
    background: #cdcdcd;
}
.statusbar {
    height: 5px;
    overflow: hidden;
    display: flex;
    padding: 2px 0 0 11px;
    line-height: 14px;
    background: #f0f0f0;
}
.statusbar span {
    flex: none;
}
.st-pads {
    width: 54px;
}
.st-vias {
    width: 50px;
}
.st-track {
    width: 113px;
}
.st-nodes {
    width: 63px;
}
.st-nets {
    width: 54px;
}

/* sheet and board drawing */
.sheet {
    fill: none;
    stroke: #4f0000;
    shape-rendering: crispEdges;
}
.sheet-text {
    font-family: "Liberation Sans", sans-serif;
    font-size: 9px;
    letter-spacing: .2px;
    fill: #5a0000;
}
.sheet-text .mid {
    text-anchor: middle;
}
.sheet-text .sheet-title {
    font-weight: bold;
    font-size: 10.500px;
}
.courtyard {
    fill: none;
    stroke: #eaeaea;
    shape-rendering: crispEdges;
}
.fab {
    fill: none;
    stroke: #72c0c4;
}
.ratsnest {
    fill: none;
    stroke-width: 1;
}
.ref {
    font-family: "DejaVu Sans Mono", monospace;
    font-size: 7px;
    fill: #3aa8c8;
    text-anchor: middle;
}
.fp-value {
    font-family: "DejaVu Sans Mono", monospace;
    font-size: 7px;
    fill: #bdbdbd;
}
.fp-value .fp-small {
    font-size: 5.600px;
}

/* labels inside icons */
.net-label {
    font-family: "Liberation Sans", sans-serif;
    font-size: 8.500px;
    font-weight: bold;
    fill: #fff;
    text-anchor: middle;
}
.ico-label {
    font-family: "Liberation Sans", sans-serif;
    font-size: 12px;
    font-weight: bold;
    fill: #444;
}
.ico-label.italic {
    font-style: italic;
}
.ico-unit {
    font-family: "DejaVu Sans", sans-serif;
    font-size: 13px;
    fill: #444;
    text-anchor: middle;
}
.ico-n {
    font-family: "Liberation Sans", sans-serif;
    font-size: 13px;
    fill: #222;
    text-anchor: middle;
}

/* overlays */
.capture-strip {
    position: absolute;
    left: 840px;
    top: 0;
    display: flex;
    height: 1px;
}
.strip-red {
    width: 48px;
    background: #f44;
}
.strip-grey {
    width: 193px;
    background: #e5e5e5;
}
.annotation {
    position: absolute;
    left: 0;
    top: 0;
    width: 1748px;
    height: 992px;
    fill: none;
    stroke: #ec1c24;
    stroke-width: 2.800;
    stroke-linecap: round;
    stroke-linejoin: round;
    pointer-events: none;
}
```
